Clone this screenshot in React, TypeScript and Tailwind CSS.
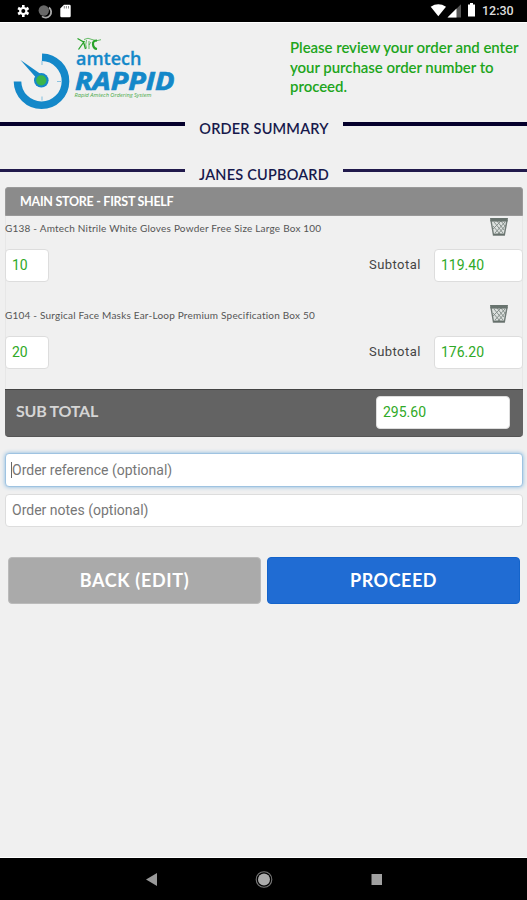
import type { ReactNode } from "react";

function StatusBar() {
  return (
    <header className="flex h-[23px] items-start justify-between border-b border-white bg-black">
      <svg width="100" height="22" viewBox="0 0 100 22">
        <g stroke="#fff" strokeWidth="2.6">
          <path d="M23.3 5v12M18.1 8l10.4 6M18.1 14l10.4-6" />
        </g>
        <circle cx="23.3" cy="11" r="4.1" fill="#fff" />
        <circle cx="23.3" cy="11" r="2" fill="#000" />
        <path d="M49 7.500A5.500 5.500 0 0 1 42 16.400" fill="none" stroke="#aaa" strokeWidth="1.800" />
        <circle cx="43.8" cy="10.500" r="5.200" fill="#686868" />
        <path d="M64 4.8h5.5q1.2 0 1.2 1.2v10q0 1.2-1.2 1.2h-8q-1.2 0-1.2-1.2V8.5z" fill="#fff" />
        <path d="M64.3 6v2.5M66.4 6v2.5M68.5 6v2.5" stroke="#777" strokeWidth=".9" />
      </svg>
      <div className="flex">
        <svg width="52" height="22" viewBox="425 0 52 22">
          <path d="M430.7 6.700Q438.3 2 446 6.700L438.3 16.3z" fill="#fff" />
          <path d="M447.5 17.500L461 4.3V17.500z" fill="#555" />
          <path d="M447.5 17.500L456.5 8.5V17.500z" fill="#fff" />
          <path d="M470 3h3v1.6h2V16.500h-7V4.6h2z" fill="#fff" />
        </svg>
        <span className="w-[45px] pl-[5px] font-[Roboto] text-[12.5px] leading-[22px] font-medium whitespace-nowrap text-[#ddd]">12:30</span>
        <span className="w-[5px]" />
      </div>
    </header>
  );
}

function Logo() {
  return (
    <svg width="190" height="90" viewBox="0 23 190 90">
      <path d="M42 57.2A24 24 0 1 1 17.5 81.5" fill="none" stroke="#1488c9" strokeWidth="7.6" />
      <path d="M20.5 60L43.5 76L38.500 80.5z" fill="#1488c9" />
      <circle cx="41.3" cy="80.3" r="7.3" fill="#1488c9" />
      <circle cx="41.3" cy="80.3" r="5.1" fill="#3ab54a" />
      <path d="M42 61v4M57 81.5h4M42 96.500v4" stroke="#8cc3e0" strokeWidth="1.1" />
      <g fill="none" stroke="#29a329">
        <path d="M77.500 38.500l6 3.500 2 7M84.500 41L78.500 49.500" strokeWidth="1.300" />
        <path d="M84 39.500q4-2.500 8 0t9 .2M86.500 40q-1.500 5 0 8.500M89 41v8M91 42l-2 3" strokeWidth=".7" />
        <path d="M97 40.500q-4.500 0-4 4t4 4.500" strokeWidth="2.200" />
      </g>
      <text x="76" y="64.500" fontFamily="Open Sans" fontWeight="600" fontSize="18.500" fill="#1488c9" stroke="#1488c9" strokeWidth=".3" textLength="65.500" lengthAdjust="spacingAndGlyphs">amtech</text>
      <text x="75" y="90.300" fontFamily="Open Sans" fontWeight="700" fontStyle="italic" fontSize="25.500" fill="#1488c9" stroke="#1488c9" strokeWidth=".7" textLength="99.500" lengthAdjust="spacingAndGlyphs">RAPPID</text>
      <text x="74.500" y="97" fontFamily="Open Sans" fontStyle="italic" fontSize="5" fill="#45a845" textLength="77" lengthAdjust="spacingAndGlyphs">Rapid Amtech Ordering System</text>
    </svg>
  );
}

function Divider({ children, line }: { children: ReactNode; line: string }) {
  return (
    <div className="flex items-start">
      <span className={`w-[185px] ${line}`} />
      <h2 className="w-[158px] pt-px text-center text-[14.5px] leading-[12px] font-semibold tracking-[0.2px] whitespace-nowrap text-[#17194c]">{children}</h2>
      <span className={`flex-1 ${line}`} />
    </div>
  );
}

function Trash() {
  return (
    <svg width="20" height="20" viewBox="0 0 20 20">
      <path d="M2 3.5L4.5 18h10.800L18 3.500z" fill="#dce0de" stroke="#707a76" strokeWidth="1.400" />
      <path d="M5 5l9 11M8 4l7 9M12 4l4 5M4 9l7 8M16 5L6 16M12 4l-8 8M17 8l-8 9" stroke="#7f8985" strokeWidth=".9" />
      <path d="M1 1h18l-.6 3.600H1.600z" fill="#68736e" />
      <path d="M4.500 17.300h11" stroke="#65706b" strokeWidth="1.500" />
    </svg>
  );
}

const field = "rounded-[4px] border border-[#ddd] bg-white font-[Roboto] text-[#2fa927]";

function Item({ name, qty, total }: { name: string; qty: string; total: string }) {
  return (
    <div className="h-[87px]">
      <div className="flex h-[33px] items-start justify-between">
        <p className="pt-[5px] text-[10px] leading-[15px] tracking-[0.21px] whitespace-nowrap text-[#555]">{name}</p>
        <span className="mr-[14px] pt-px"><Trash /></span>
      </div>
      <div className="flex items-center">
        <div className={`h-[33px] w-[44px] pl-[6px] text-[14px] leading-[30px] ${field}`}>{qty}</div>
        <span className="ml-auto w-[52px] -translate-y-px font-[Roboto] text-[13px] tracking-[0.45px] text-[#444]">Subtotal</span>
        <div className={`ml-[13px] h-[33px] w-[89px] pl-[6px] text-[14px] leading-[30px] ${field}`}>{total}</div>
      </div>
    </div>
  );
}

export default function App() {
  return (
    <main className="flex h-[900px] w-[527px] flex-col overflow-hidden bg-[#f0f0f0] font-[Lato,sans-serif]">
      <StatusBar />
      <div className="flex h-[99px]">
        <Logo />
        <p className="ml-[100px] pt-[15px] text-[15px] leading-[19.5px] font-semibold tracking-[-0.05px] whitespace-nowrap text-[#20a51b]">
          Please review your order and enter<br />your purchase order number to<br />proceed.
        </p>
      </div>
      <div className="h-[46px]"><Divider line="h-[3.500px] bg-[#05002c]">ORDER SUMMARY</Divider></div>
      <div className="h-[19px]"><Divider line="mt-px h-[3px] bg-[#211a4c]">JANES CUPBOARD</Divider></div>
      <section className="mr-[4px] ml-[5px] flex h-[250px] flex-col">
        <h3 className="h-[29px] rounded-t-[3px] border border-[#999] bg-[#8b8b8b] pl-[14px] text-[12.5px] leading-[27px] font-bold tracking-[-0.28px] text-white">MAIN STORE - FIRST SHELF</h3>
        <div className="h-[173px] border-x border-[#e7e7e7]">
          <div className="-mx-px">
            <Item name="G138 - Amtech Nitrile White Gloves Powder Free Size Large Box 100" qty="10" total="119.40" />
            <Item name="G104 - Surgical Face Masks Ear-Loop Premium Specification Box 50" qty="20" total="176.20" />
          </div>
        </div>
        <div className="flex h-[48px] items-start justify-between rounded-b-[4px] border-t border-b border-t-[#444] border-b-[#555] bg-[#636363] pr-[13px] pl-[11px]">
          <span className="pt-[10px] text-[16px] leading-[22px] font-bold tracking-[-0.25px] text-[#d5d5d5]">SUB TOTAL</span>
          <div className={`mt-[6px] h-[33px] w-[134px] pl-[6px] text-[14px] leading-[31px] ${field}`}>295.60</div>
        </div>
      </section>
      <section className="mr-[4px] ml-[5px] mt-[16px] flex flex-col gap-[7px] font-[Roboto] text-[14px] text-[#777]">
        <div className="flex h-[34px] items-center rounded-[4px] border border-[#9fc3e1] bg-white pl-[5px] shadow-[0_0_4px_#86b8e0]">
          <span className="h-[16px] w-px bg-[#666]" />
          <span>Order reference (optional)</span>
        </div>
        <div className="flex h-[33px] items-center rounded-[4px] border border-[#ddd] bg-white pl-[6px]">Order notes (optional)</div>
      </section>
      <section className="mt-[30px] flex gap-[6px] pr-[7px] pl-[8px] text-[18px] font-bold text-white">
        <button className="h-[47px] flex-1 rounded-[4px] border border-[#bbb] bg-[#aaa] tracking-[0.65px]">BACK (EDIT)</button>
        <button className="h-[47px] flex-1 rounded-[4px] border border-[#1464cb] bg-[#206cd3] tracking-[0.5px]">PROCEED</button>
      </section>
      <nav className="mt-auto h-[43px] border-t border-white bg-black">
        <svg width="527" height="42" viewBox="0 858 527 42">
          <path d="M146 879.500L157 873v13z" fill="#999" />
          <circle cx="264" cy="879.500" r="6" fill="#aaa" />
          <circle cx="264" cy="879.500" r="7.800" fill="none" stroke="#777" strokeWidth="1.100" />
          <path d="M371.500 874h10.500v11h-10.500z" fill="#a0a0a0" />
        </svg>
      </nav>
    </main>
  );
}
